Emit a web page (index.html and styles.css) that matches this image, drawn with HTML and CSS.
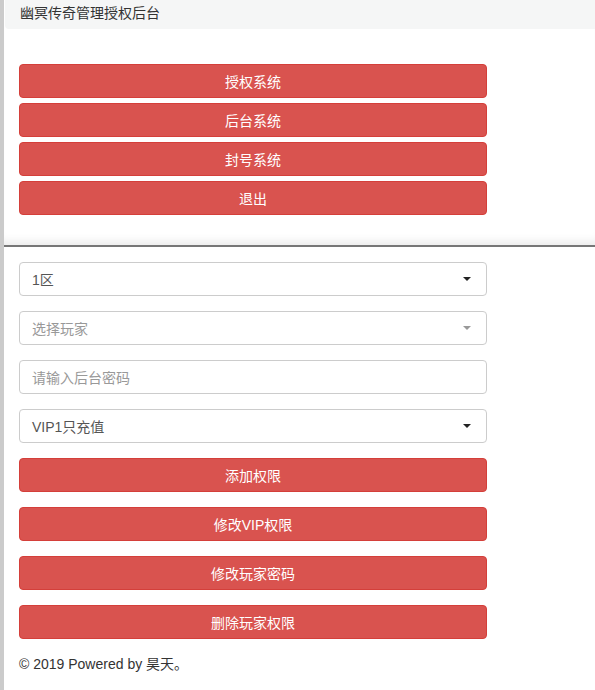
FILE: index.html
```html
<!DOCTYPE html>
<html lang="zh">
<head>
<meta charset="utf-8">
<title>幽冥传奇管理授权后台</title>
<link rel="stylesheet" href="styles.css">
</head>
<body>
<div class="page">
  <section class="panel-top">
    <div class="panel-heading">幽冥传奇管理授权后台</div>
    <div class="panel-body menu">
      <button class="btn">授权系统</button>
      <button class="btn">后台系统</button>
      <button class="btn">封号系统</button>
      <button class="btn">退出</button>
    </div>
  </section>
  <section class="panel-main">
    <div class="form">
      <div class="control select">
        <span>1区</span>
        <span class="caret"></span>
      </div>
      <div class="control select placeholder">
        <span>选择玩家</span>
        <span class="caret light"></span>
      </div>
      <div class="control placeholder">
        <span>请输入后台密码</span>
      </div>
      <div class="control select">
        <span>VIP1只充值</span>
        <span class="caret"></span>
      </div>
      <button class="btn">添加权限</button>
      <button class="btn">修改VIP权限</button>
      <button class="btn">修改玩家密码</button>
      <button class="btn">删除玩家权限</button>
    </div>
    <p class="footer">© 2019 Powered by 昊天。</p>
  </section>
</div>
</body>
</html>
```

FILE: styles.css
```css
html, body {
  margin: 0;
  padding: 0;
  background: #fff;
}
body {
  font-family: "Liberation Sans", "Noto Sans CJK SC", sans-serif;
  font-size: 14px;
  color: #333;
}
.page {
  border-left: 4px solid #cbcbcb;
  min-height: 690px;
  box-sizing: border-box;
}
.panel-top {
  background: #fff;
  height: 247px;
  box-sizing: border-box;
  border-bottom: 2px solid #777;
  box-shadow: inset 0 -10px 8px -6px #ececec;
}
.panel-heading {
  height: 29px;
  line-height: 27px;
  padding-left: 15px;
  margin-left: 1px;
  background: #f5f6f6;
  border-bottom-left-radius: 4px;
  color: #333;
  font-size: 14px;
}
.panel-body {
  padding: 35px 15px 0;
}
.menu {
  display: flex;
  flex-direction: column;
  gap: 5px;
  width: 468px;
}
.btn {
  display: block;
  width: 468px;
  height: 34px;
  padding: 0;
  margin: 0;
  background: #d9534f;
  border: 1px solid #d43f3a;
  border-radius: 4px;
  color: #fff;
  font-family: "Liberation Sans", "Noto Sans CJK SC", sans-serif;
  font-size: 14px;
  text-align: center;
  box-sizing: border-box;
}
.panel-main {
  padding: 15px 15px 0;
}
.form {
  display: flex;
  flex-direction: column;
  gap: 15px;
  width: 468px;
}
.control {
  height: 34px;
  box-sizing: border-box;
  border: 1px solid #ccc;
  border-radius: 4px;
  padding: 0 12px;
  display: flex;
  align-items: center;
  justify-content: space-between;
  color: #555;
  font-size: 14px;
}
.control.placeholder {
  color: #999;
}
.caret {
  width: 0;
  height: 0;
  border-left: 4px solid transparent;
  border-right: 4px solid transparent;
  border-top: 4px solid #222;
  margin-right: 3px;
}
.caret.light {
  border-top-color: #999;
}
.footer {
  margin: 15px 0 0;
  line-height: 20px;
  color: #333;
}
```
